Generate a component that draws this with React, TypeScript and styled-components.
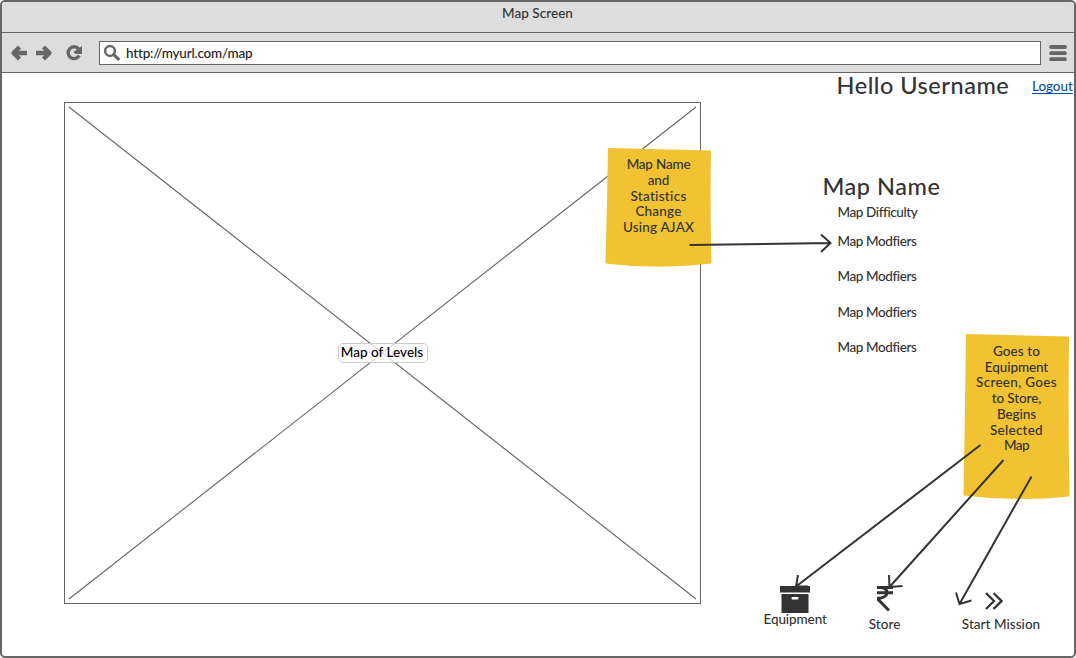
import React from 'react';
import styled, { createGlobalStyle } from 'styled-components';

const ink = '#333';
const line = '#666';

const GlobalStyle = createGlobalStyle`
  *, *::before, *::after { box-sizing: border-box; }
  body {
    margin: 0;
    background: #fff;
    color: ${ink};
    font: 500 13.5px/16px Lato, "Liberation Sans", sans-serif;
    font-variant-ligatures: none;
  }
`;

const Window = styled.div`
  position: relative;
  display: flex;
  flex-direction: column;
  width: 1076px;
  height: 658px;
  border: 2px solid ${line};
  border-radius: 5px;
  overflow: hidden;
  background: #fff;
`;

const TitleBar = styled.header`
  height: 31px;
  padding: 3px 1px 0 0;
  border-bottom: 1px solid ${line};
  background: #ddd;
  text-align: center;
  letter-spacing: 0.05px;
`;

const Toolbar = styled.nav`
  display: flex;
  align-items: center;
  height: 40px;
  padding: 0 7px 0 8px;
  border-bottom: 1px solid ${line};
  background: #ddd;
`;

const NavIcons = styled.svg`
  width: 76px;
  height: 20px;
  margin-right: 13px;
`;

const AddressBar = styled.div`
  display: flex;
  align-items: center;
  flex: 1;
  height: 24px;
  margin-right: 8px;
  padding-left: 3px;
  border: 1px solid ${line};
  background: #fff;
  color: #222;
  letter-spacing: -0.2px;
`;

const SearchIcon = styled.svg`
  width: 18px;
  height: 18px;
  margin-right: 5px;
`;

const MenuIcon = styled.svg`
  width: 18px;
  height: 18px;
`;

const Page = styled.main`
  display: flex;
  flex: 1;
  min-height: 0;
`;

const MapFrame = styled.section`
  display: grid;
  place-items: center;
  flex: none;
  width: 637px;
  height: 502px;
  margin: 29px 0 0 62px;
  border: 1px solid ${line};

  > * { grid-area: 1 / 1; }
`;

const Cross = styled.svg`
  width: 635px;
  height: 500px;
`;

const MapLabel = styled.span`
  height: 20px;
  width: 90px;
  padding-right: 1px;
  border: 1px solid #ccc;
  border-radius: 5px;
  background: rgba(255, 255, 255, 0.75);
  color: #000;
  line-height: 17px;
  text-align: center;
  letter-spacing: 0.02px;
`;

const Sidebar = styled.aside`
  display: flex;
  flex: 1;
  flex-direction: column;
`;

const Account = styled.div`
  display: flex;
  justify-content: space-between;
  padding: 0 2.5px 0 135.5px;
`;

const Heading = styled.h1`
  margin: 0;
  font-size: 23.5px;
  font-weight: 500;
  line-height: 25px;
  letter-spacing: 0.53px;
  white-space: nowrap;
`;

const Logout = styled.a`
  height: 16px;
  margin-top: 5px;
  border-bottom: 1px solid #0b4f9e;
  color: #0b4f9e;
  line-height: 16px;
  letter-spacing: -0.08px;
`;

const Details = styled.div`
  margin-top: 76px;
  padding-left: 121.5px;
`;

const Facts = styled.ul`
  display: flex;
  flex-direction: column;
  gap: 19.4px;
  margin: 5px 0 0;
  padding: 0 0 0 15px;
  list-style: none;
  letter-spacing: -0.4px;
`;

const Difficulty = styled.li`
  margin-bottom: -6.4px;
`;

const Actions = styled.div`
  display: flex;
  margin-top: auto;
  padding: 0 35px 25px 62.5px;
`;

const Action = styled.button<{ $gap: number; $tight?: boolean }>`
  display: flex;
  flex-direction: column;
  align-items: center;
  height: 45px;
  margin: ${p => (p.$tight ? '-2px 0 0' : '0')};
  margin-right: ${p => p.$gap}px;
  padding: 0;
  border: 0;
  background: none;
  color: inherit;
  font: inherit;
  letter-spacing: ${p => (p.$tight ? '-0.1px' : '0.03px')};
  white-space: nowrap;
`;

const ActionIcon = styled.svg<{ $w: number; $h: number; $top: number; $bottom: number; $pull?: number }>`
  width: ${p => p.$w}px;
  height: ${p => p.$h}px;
  margin: ${p => p.$top}px ${p => p.$pull ?? 0}px ${p => p.$bottom}px 0;
  flex: none;
`;

const Sticky = styled.div<{ $x: number; $y: number; $h: number }>`
  position: absolute;
  left: ${p => p.$x}px;
  top: ${p => p.$y}px;
  width: 107px;
  height: ${p => p.$h}px;
`;

const Paper = styled.svg`
  position: absolute;
  inset: 0;
`;

const StickyText = styled.p<{ $top: number }>`
  position: relative;
  margin: 0;
  padding-top: ${p => p.$top}px;
  line-height: 15.7px;
  text-align: center;
`;

const StickyLine = styled.span<{ $track: number }>`
  display: block;
  letter-spacing: ${p => p.$track}px;
`;

const Arrows = styled.svg`
  position: absolute;
  left: -2px;
  top: -2px;
  pointer-events: none;
`;

const changeNote: [string, number][] = [
  ['Map Name', -0.2], ['and', -0.1], ['Statistics', 0.3], ['Change', 0.2], ['Using AJAX', 0.2],
];
const goesNote: [string, number][] = [
  ['Goes to', 0.1], ['Equipment', -0.1], ['Screen, Goes', 0.3], ['to Store,', -0.1],
  ['Begins', -0.1], ['Selected', 0.25], ['Map', -0.5],
];

const lines = (list: [string, number][]) =>
  list.map(([text, track]) => <StickyLine key={text} $track={track}>{text}</StickyLine>);

export default function App() {
  return (
    <>
      <GlobalStyle />
      <Window>
        <TitleBar>Map Screen</TitleBar>
        <Toolbar>
          <NavIcons viewBox="0 0 76 20" fill="none" stroke={line}>
            <path
              d="M3.500 10H17M9.500 4L3.500 10l6 6M26 10h13.500M33.500 4l6 6-6 6"
              strokeLinejoin="round"
              strokeWidth="4.300"
            />
            <path d="M68.500 5.800A5.900 5.900 0 1 0 69.300 12.500" strokeWidth="3.400" />
            <path d="M72 3v8h-6.500l-2-2z" fill={line} stroke="none" />
          </NavIcons>
          <AddressBar>
            <SearchIcon viewBox="0 0 18 18" fill="none" stroke={line}>
              <circle cx="7" cy="7" r="4.900" strokeWidth="2.500" />
              <path d="M10.700 10.700L15.300 15" strokeWidth="3.200" strokeLinecap="round" />
            </SearchIcon>
            http://myurl.com/map
          </AddressBar>
          <MenuIcon viewBox="0 0 18 18" stroke={line} strokeWidth="3.800" strokeLinecap="round">
            <path d="M2 3h14M2 9.100h14M2 15.200h14" />
          </MenuIcon>
        </Toolbar>
        <Page>
          <MapFrame>
            <Cross viewBox="0 0 635 500" stroke={line} strokeWidth="1.100">
              <path d="M4 4L631 496M631 4L4 496" />
            </Cross>
            <MapLabel>Map of Levels</MapLabel>
          </MapFrame>
          <Sidebar>
            <Account>
              <Heading>Hello Username</Heading>
              <Logout>Logout</Logout>
            </Account>
            <Details>
              <Heading as="h2">Map Name</Heading>
              <Facts>
                <Difficulty>Map Difficulty</Difficulty>
                <li>Map Modfiers</li>
                <li>Map Modfiers</li>
                <li>Map Modfiers</li>
                <li>Map Modfiers</li>
              </Facts>
            </Details>
            <Actions>
              <Action $gap={42} $tight>
                <ActionIcon $w={30} $h={27} $top={2} $bottom={-2} viewBox="0 0 30 27" fill={ink}>
                  <path d="M0 0h30v6.500H0zM1.500 8h27v19h-27z" />
                  <rect x="11.500" y="11" width="7" height="2.500" rx="1" fill="#fff" />
                </ActionIcon>
                Equipment
              </Action>
              <Action $gap={61.5}>
                <ActionIcon $w={16} $h={26} $top={0} $bottom={4} viewBox="0 0 16 26" fill="none" stroke={ink} strokeWidth="3">
                  <path d="M0 1.600h16M0 6.700h16M3 1.600c10 0 9.500 10.600-2 10.600v1.200L12 24.500" />
                </ActionIcon>
                Store
              </Action>
              <Action $gap={0}>
                <ActionIcon $w={18} $h={18} $top={6} $bottom={6} $pull={14} viewBox="0 0 18 18" fill="none" stroke={ink} strokeWidth="2.300">
                  <path d="M1 1l8 8-8 8M8.500 1l8 8-8 8" />
                </ActionIcon>
                Start Mission
              </Action>
            </Actions>
          </Sidebar>
        </Page>
        <Sticky $x={603} $y={146} $h={119}>
          <Paper width="107" height="119" fill="#f1c232">
            <path d="M3 0L106 2.500Q105 60 106.500 115.500Q53 122 0.500 115.500Q2 58 3 0z" />
          </Paper>
          <StickyText $top={9.3}>{lines(changeNote)}</StickyText>
        </Sticky>
        <Sticky $x={961} $y={332} $h={166}>
          <Paper width="107" height="166" fill="#f1c232">
            <path d="M3 0L106 2.500Q105 85 106.500 162.500Q53 168 0.500 161.500Q2 80 3 0z" />
          </Paper>
          <StickyText $top={10}>{lines(goesNote)}</StickyText>
        </Sticky>
        <Arrows width="1076" height="658" fill="none" stroke={ink} strokeWidth="2">
          <path d="M689.500 245L830.500 243M821 234.500L830.500 243L821 252" />
          <path d="M980.500 445L796 586.500M798 575L796 586.500L808 586.500" />
          <path d="M1003.500 460L889.500 587M889 575L889.500 587L902.500 586" />
          <path d="M1031.500 476.500L959.500 604M956 592.500L959.500 604L971.500 600.500" />
        </Arrows>
      </Window>
    </>
  );
}
